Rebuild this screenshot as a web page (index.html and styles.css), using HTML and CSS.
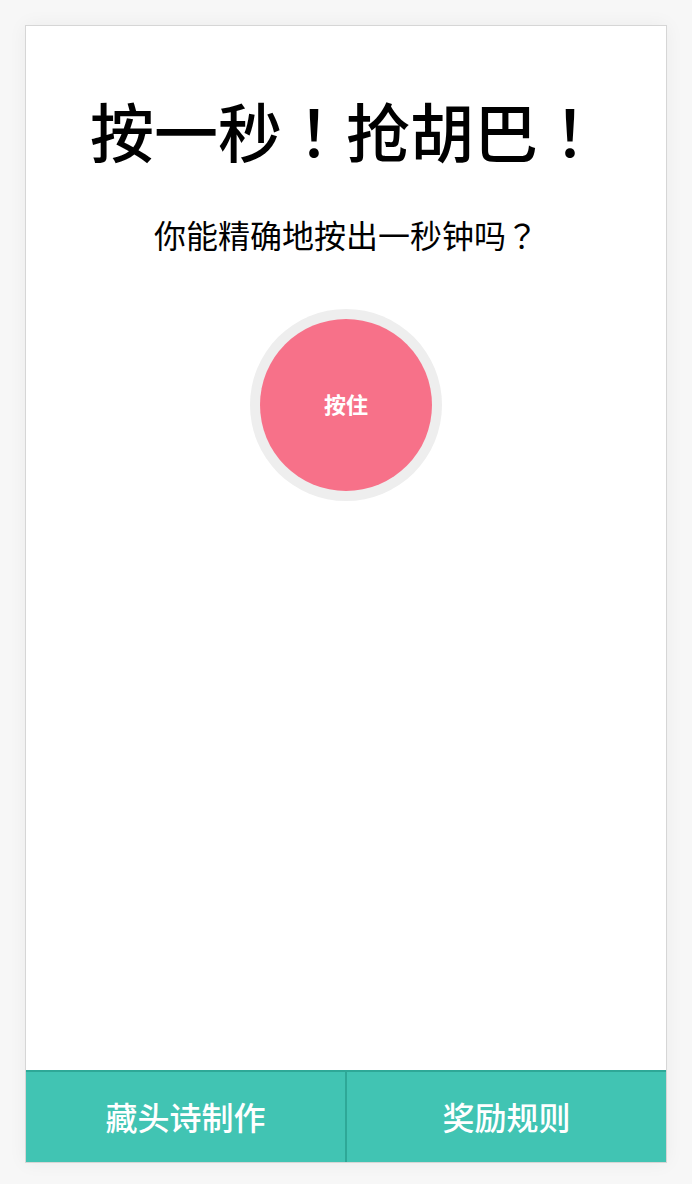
FILE: index.html
```html
<!DOCTYPE html>
<html lang="zh-CN">
<head>
<meta charset="utf-8">
<title>按一秒！抢胡巴！</title>
<link rel="stylesheet" href="styles.css">
</head>
<body>
<div class="card">
  <h1 class="title">按一秒<span class="punct" lang="zh-TW">！</span>抢胡巴<span class="punct" lang="zh-TW">！</span></h1>
  <p class="subtitle">你能精确地按出一秒钟吗<span class="punct" lang="zh-TW">？</span></p>
  <div class="press-ring">
    <button class="press-btn" type="button">按住</button>
  </div>
  <div class="bottom-bar">
    <a class="bar-btn bar-btn-left" href="#">藏头诗制作</a>
    <a class="bar-btn" href="#">奖励规则</a>
  </div>
</div>
</body>
</html>
```
FILE: styles.css
```css
html, body {
  margin: 0;
  padding: 0;
}
body {
  background: #f7f7f7;
  padding: 25px 25px 21px;
  font-family: "Noto Sans CJK SC", "Noto Sans", sans-serif;
  color: #000;
}
.card {
  box-sizing: border-box;
  height: 1138px;
  background: #fff;
  border: 1px solid #d6d6d6;
  box-shadow: 0 0 18px rgba(0, 0, 0, 0.05);
  display: flex;
  flex-direction: column;
  align-items: center;
}
.title {
  margin: 71px 0 0;
  font-size: 64px;
  line-height: 64px;
  font-weight: 500;
  text-align: center;
}
.punct {
  font-family: "Noto Sans CJK TC", "Noto Sans CJK JP", sans-serif;
}
.subtitle {
  margin: 57px 0 0;
  font-size: 32px;
  line-height: 32px;
  font-weight: 400;
  text-align: center;
}
.press-ring {
  margin-top: 59px;
  width: 192px;
  height: 192px;
  border-radius: 50%;
  background: #eeeeee;
  display: flex;
  align-items: center;
  justify-content: center;
}
.press-btn {
  width: 172px;
  height: 172px;
  border-radius: 50%;
  border: none;
  background: #f77189;
  color: #fff;
  font-family: "Noto Sans CJK SC", "Noto Sans", sans-serif;
  font-size: 22px;
  line-height: 22px;
  font-weight: 700;
  padding: 0 0 4px;
}
.bottom-bar {
  margin-top: auto;
  align-self: stretch;
  display: flex;
  height: 92px;
  box-sizing: border-box;
  border-top: 2px solid #2ea897;
  background: #41c4b3;
}
.bar-btn {
  flex: 1;
  display: flex;
  align-items: center;
  justify-content: center;
  color: #fff;
  text-decoration: none;
  font-size: 32px;
  font-weight: 500;
  padding-bottom: 2px;
}
.bar-btn-left {
  border-right: 2px solid #2ea897;
}
```
